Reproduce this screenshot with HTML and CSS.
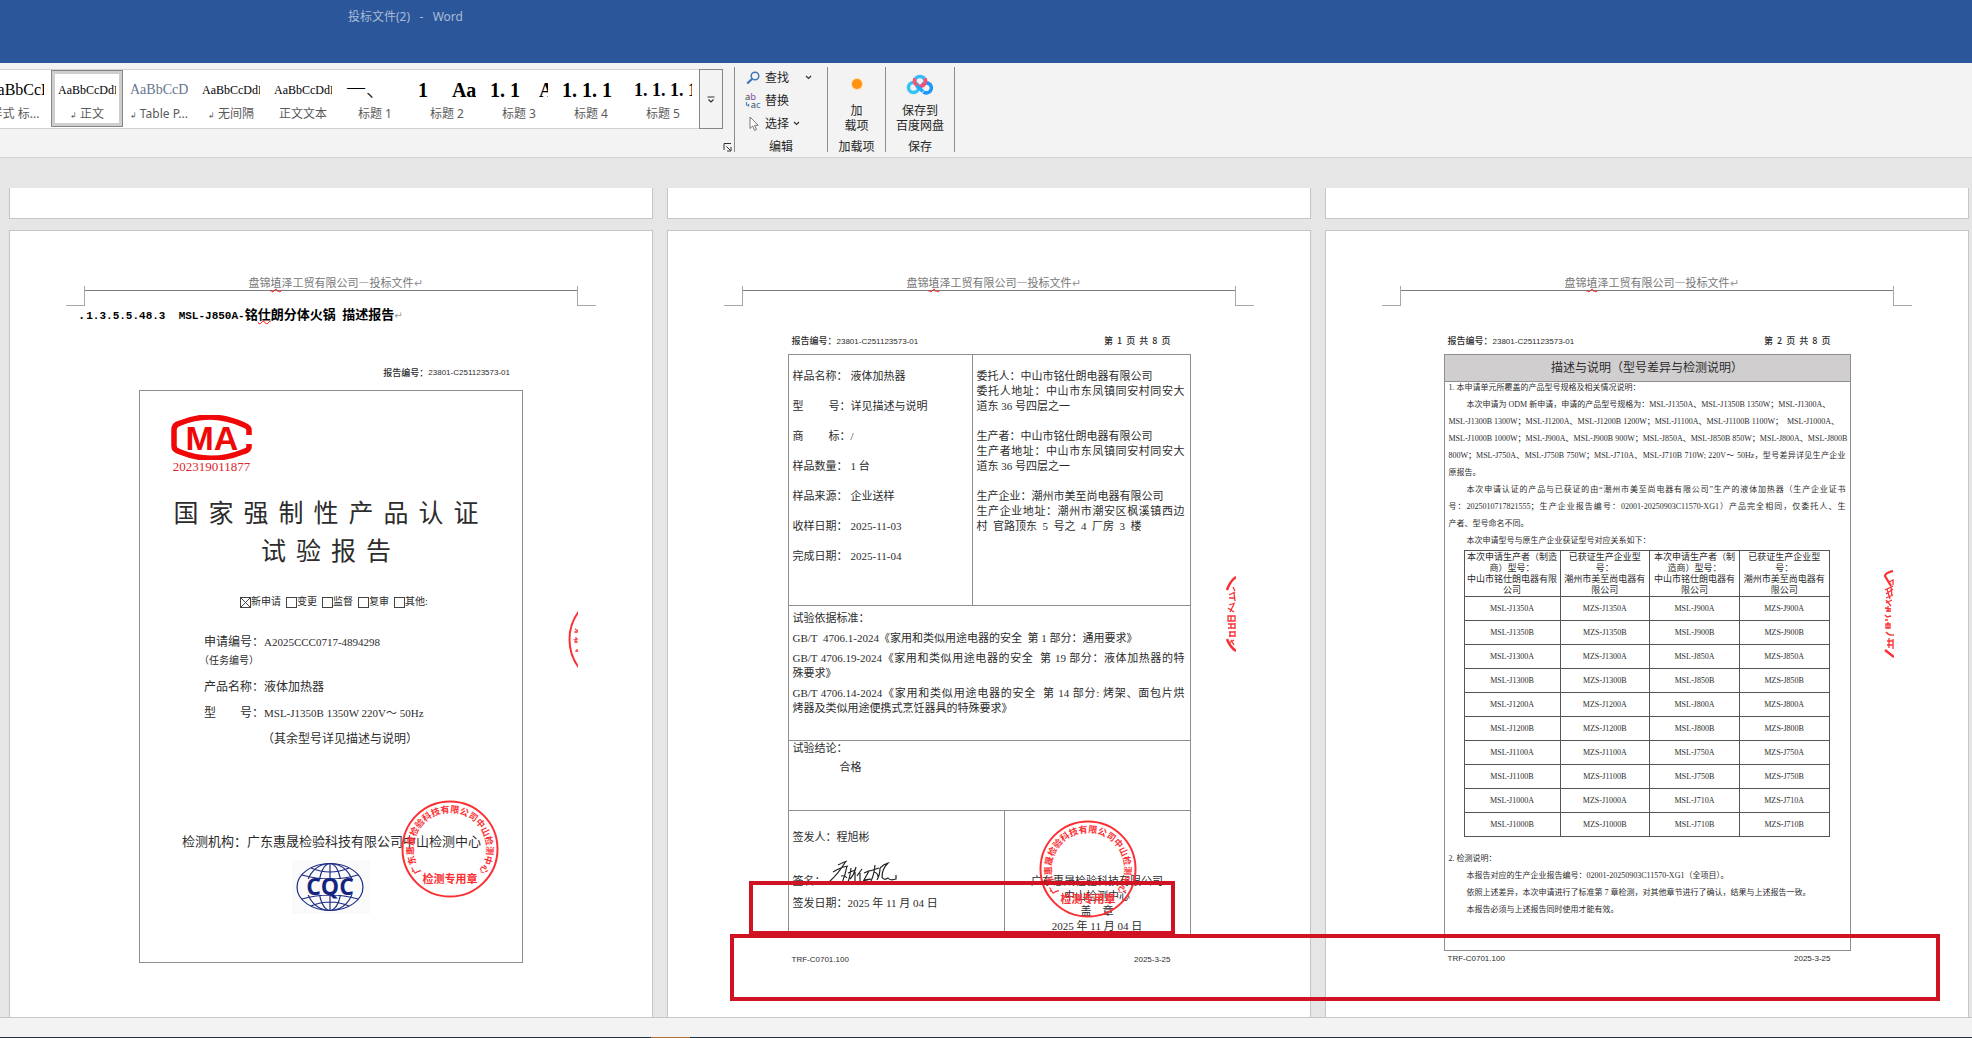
FILE: index.html
```html
<!DOCTYPE html>
<html lang="zh-CN">
<head>
<meta charset="utf-8">
<title>投标文件(2) - Word</title>
<link rel="stylesheet" href="styles.css">
</head>
<body>
<svg class="defs" aria-hidden="true">
  <defs>
    <path id="seal-arc" d="M21 72.500 A36.500 36.500 0 1 1 77 72.500"/>
    <symbol id="seal" viewBox="0 0 98 98">
      <circle cx="49" cy="49" r="47.5" fill="none" stroke="#fb3034" stroke-width="2"/>
      <text class="seal-ring"><textPath href="#seal-arc" startOffset="50%" text-anchor="middle">广东惠晟检验科技有限公司中山检测中心</textPath></text>
      <text class="seal-name" x="49" y="83" text-anchor="middle">检测专用章</text>
    </symbol>
    <symbol id="caret" viewBox="0 0 7 5"><path d="M1 1l2.5 2.5L6 1" fill="none" stroke="#333" stroke-width="1.2"/></symbol>
  </defs>
</svg>

<header class="titlebar">投标文件(2)&nbsp;&nbsp; -&nbsp;&nbsp; Word</header>

<div class="ribbon">
  <section class="group styles-group">
    <div class="gallery">
      <div class="gallery-items">
        <button class="style"><span class="preview p16">AaBbCcDdE</span><span class="name">样式 标...</span></button>
        <button class="style selected"><span class="preview p12">AaBbCcDdEe</span><span class="name"><i>↲</i> 正文</span></button>
        <button class="style"><span class="preview p14">AaBbCcDdE</span><span class="name"><i>↲</i> Table P...</span></button>
        <button class="style"><span class="preview p12">AaBbCcDdEe</span><span class="name"><i>↲</i> 无间隔</span></button>
        <button class="style"><span class="preview p12">AaBbCcDdEe</span><span class="name">正文文本</span></button>
        <button class="style"><span class="preview p20 thin">一、</span><span class="name">标题 1</span></button>
        <button class="style"><span class="preview p20 strong">1     Aa</span><span class="name">标题 2</span></button>
        <button class="style"><span class="preview p20 strong">1. 1    Aa</span><span class="name">标题 3</span></button>
        <button class="style"><span class="preview p20 strong">1. 1. 1</span><span class="name">标题 4</span></button>
        <button class="style"><span class="preview p18 strong">1. 1. 1. 1</span><span class="name">标题 5</span></button>
      </div>
      <button class="more" aria-label="其他样式"><svg width="8" height="7" viewBox="0 0 8 7"><path d="M0.5 1h7M1.5 3.5L4 6l2.500-2.500" fill="none" stroke="#333" stroke-width="1.200"/></svg></button>
    </div>
    <button class="launcher" aria-label="样式窗格"><svg width="9" height="9" viewBox="0 0 9 9"><path d="M1 7V.5h7M3.500 3.500l4 4M8 4v4H4" fill="none" stroke="#333"/></svg></button>
  </section>
  <section class="group edit-group">
    <div class="edit-list">
      <button class="cmd"><svg width="14" height="14" viewBox="0 0 14 14"><circle cx="9" cy="5" r="3.800" fill="none" stroke="#3f74b5" stroke-width="1.500"/><path d="M6 8L1.200 12.500" stroke="#3f74b5" stroke-width="2.200"/></svg><span>查找</span><svg class="far" width="7" height="5"><use href="#caret"/></svg></button>
      <button class="cmd"><svg width="17" height="16" viewBox="0 0 17 16"><text x="0" y="7" class="ab">a<tspan fill="#8a4fb0">b</tspan></text><text x="6" y="15" class="ab">a<tspan fill="#2f74c0">c</tspan></text><path d="M1.500 9v3.500H4M3 11l1.500 1.500L3 14" fill="none" stroke="#2f74c0"/></svg><span>替换</span></button>
      <button class="cmd"><svg width="14" height="16" viewBox="0 0 14 16"><path d="M4 1v11.500l2.700-2.600 1.900 4.500 1.900-.8-1.900-4.300h3.600z" fill="#fff" stroke="#777"/></svg><span>选择</span><svg width="7" height="5"><use href="#caret"/></svg></button>
    </div>
    <h2>编辑</h2>
  </section>
  <section class="group addin-group">
    <button class="big"><svg width="26" height="26" viewBox="0 0 26 26"><circle cx="13" cy="13" r="6" fill="#ffd9a0"/><circle cx="13" cy="13" r="5" fill="#ff9310"/></svg><span>加<br>载项</span></button>
    <h2>加载项</h2>
  </section>
  <section class="group save-group">
    <button class="big"><svg width="28" height="26" viewBox="0 0 28 26"><g fill="none" stroke-width="3.600"><circle cx="7.500" cy="16.500" r="5" stroke="#35c3f5"/><path d="M16 14.500a5 5 0 1 1 1.500 6.500" stroke="#1a9bfb"/><path d="M8.500 11a5.500 5.500 0 0 1 11 0" stroke="#38b9f8"/><path d="M19 7.500a5.500 5.500 0 1 1-10 0" stroke="#fb5273"/><path d="M10.500 14.500l6.500 6" stroke="#1fa8fa"/></g></svg><span>保存到<br>百度网盘</span></button>
    <h2>保存</h2>
  </section>
</div>

<main class="workspace">
  <div class="sheets tails"><div class="tail"></div><div class="tail"></div><div class="tail"></div></div>
  <div class="sheets">

    <article class="page">
      <div class="running"><span>盘锦<u>埴</u>泽工贸有限公司—投标文件</span><i>↵</i></div>
      <h1 class="outline"><b>.</b><span>1.3.5.5.48.3&nbsp;&nbsp;MSL-J850A-</span>铭<u>仕</u>朗分体火锅&nbsp; 描述报告<i>↵</i></h1>
      <div class="scan cover">
        <p class="report-no">报告编号：<span>23801-C251123573-01</span></p>
        <div class="frame">
          <div class="cma">
            <svg width="81" height="45" viewBox="0 0 81 45"><path d="M78 20V15Q78 12 73 10Q40-5 8 8.500Q3 10 3 15V31Q3 35 8 36.500Q40 50 73 36.500Q78 35 78 32V29" fill="none" stroke="#f00808" stroke-width="5.500"/><text x="41" y="35" text-anchor="middle">MA</text></svg>
            <p>202319011877</p>
          </div>
          <h2 class="cover-title">国家强制性产品认证<br>试验报告</h2>
          <div class="kinds">
            <label><input type="checkbox" checked>新申请</label>
            <label><input type="checkbox">变更</label>
            <label><input type="checkbox">监督</label>
            <label><input type="checkbox">复审</label>
            <label><input type="checkbox">其他:</label>
          </div>
          <dl class="facts">
            <dt>申请编号：</dt><dd class="code">A2025CCC0717-4894298</dd>
            <dt class="note">（任务编号）</dt><dd></dd>
            <dt>产品名称：</dt><dd>液体加热器</dd>
            <dt class="spread"><span>型</span><span>号：</span></dt><dd class="code">MSL-J1350B 1350W 220V～ 50Hz</dd>
            <dt></dt><dd>（其余型号详见描述与说明）</dd>
          </dl>
          <p class="lab">检测机构：广东惠晟检验科技有限公司中山检测中心</p>
          <svg class="cqc" width="78" height="54" viewBox="0 0 78 54"><rect width="78" height="54" fill="#fafafa"/><g fill="none" stroke="#1c2c84" stroke-width="1.200"><ellipse cx="38" cy="27" rx="33" ry="23.500"/><ellipse cx="38" cy="27" rx="23" ry="23.500"/><ellipse cx="38" cy="27" rx="11" ry="23.500"/><path d="M38 3.500v47M19 8q19 8 38 0M10 15q28 8 56 0M10 39q28-8 56 0M19 46q19-8 38 0"/></g><path d="M12 19h52v16H12z" fill="#fafafa"/><text x="38" y="34.500" text-anchor="middle">CQC</text></svg>
          <svg class="seal seal-cover" width="98" height="98"><use href="#seal"/></svg>
        </div>
      </div>
      <svg class="edge edge-a" width="10" height="57" viewBox="0 0 10 57"><circle cx="48" cy="28.500" r="46.500" fill="none" stroke="#fb3034" stroke-width="2"/><path d="M7 18l3 2M6 21h4M8 20v2M5.500 29l4.500-1M8 26v6M6 31h4M7 40h3M9 38v3" fill="none" stroke="#fb3034" stroke-width="1.200"/></svg>
    </article>

    <article class="page marked">
      <div class="running"><span>盘锦<u>埴</u>泽工贸有限公司—投标文件</span><i>↵</i></div>
      <div class="scan form">
        <p class="bar"><span>报告编号：<b>23801-C251123573-01</b></span><span class="folio">第  1  页  共  8  页</span></p>
        <div class="frame">
          <div class="sample">
            <dl>
              <dt>样品名称：</dt><dd>液体加热器</dd>
              <dt class="spread"><span>型</span><span>号：</span></dt><dd>详见描述与说明</dd>
              <dt class="spread"><span>商</span><span>标：</span></dt><dd>/</dd>
              <dt>样品数量：</dt><dd>1 台</dd>
              <dt>样品来源：</dt><dd>企业送样</dd>
              <dt>收样日期：</dt><dd>2025-11-03</dd>
              <dt>完成日期：</dt><dd>2025-11-04</dd>
            </dl>
            <div class="parties">
              <p><span>委托人：中山市铭仕朗电器有限公司</span><span class="full">委托人地址：中山市东凤镇同安村同安大</span><span>道东 36 号四层之一</span></p>
              <p><span>生产者：中山市铭仕朗电器有限公司</span><span class="full">生产者地址：中山市东凤镇同安村同安大</span><span>道东 36 号四层之一</span></p>
              <p><span>生产企业：潮州市美至尚电器有限公司</span><span class="full">生产企业地址：潮州市潮安区枫溪镇西边</span><span>村&nbsp; 官路顶东&nbsp; 5&nbsp; 号之&nbsp; 4&nbsp; 厂房&nbsp; 3&nbsp; 楼</span></p>
            </div>
          </div>
          <div class="standards">
            <p>试验依据标准：</p>
            <p>GB/T&nbsp; 4706.1-2024《家用和类似用途电器的安全&nbsp; 第 1 部分：通用要求》</p>
            <p><span class="full">GB/T 4706.19-2024《家用和类似用途电器的安全&nbsp; 第 19 部分：液体加热器的特</span><span>殊要求》</span></p>
            <p><span class="full">GB/T 4706.14-2024《家用和类似用途电器的安全&nbsp; 第 14 部分: 烤架、面包片烘</span><span>烤器及类似用途便携式烹饪器具的特殊要求》</span></p>
          </div>
          <div class="verdict"><p>试验结论：</p><p class="answer">合格</p></div>
          <div class="signoff">
            <div class="signer">
              <p>签发人：程旭彬</p>
              <p class="sign">签名：<svg width="68" height="24" viewBox="0 0 68 24"><path d="M9 5q6-3 9-4M17 1Q10 13 0 22M4 12q8-5 15-6M18 6q-2 10-5 17M12 16q4-1 6 2M22 8q-1 9-3 14M19 13l7-3M27 7q-2 8-6 12M26 12v10M33 9q-3 4-5 7M31 13v8M35 13l5-2-5 9 6-1M34 21l8-2M46 5q-1 10-4 16M41 11l9-3M45 12q4 1 4 5M51 8q0 7-3 12M51 8q4-4 8-5-6 6-6 14 2 4 6 1 2 3 8 1v-4" fill="none" stroke="#222" stroke-width="1.200"/></svg></p>
              <p>签发日期：2025 年 11 月 04 日</p>
            </div>
            <div class="issuer"><p>广东惠晟检验科技有限公司</p><p>中山检测中心</p><p>盖　章</p><p>2025 年 11 月 04 日</p>
              <svg class="seal seal-form" width="98" height="98"><use href="#seal"/></svg></div>
          </div>
        </div>
        <p class="bar foot"><b>TRF-C0701.100</b><b>2025-3-25</b></p>
      </div>
      <svg class="edge edge-b" width="10" height="76" viewBox="0 0 10 76"><g fill="none" stroke="#fb3034" stroke-width="1.300"><path d="M1 14Q4 5 10 1" stroke-width="2.500"/><path d="M7 11l2 4M3 19l6-3M3 22h5M8 17l1 8M3 29l6-2M2 32l6 4M8 28l-4 8M2 40h7v5H2zM5 40v5M2 48h7M2 52h7M5 48v4M9 47v6M3 56h6M4 56v5M9 55v6M3 60h6M3 67l5-3M5 64l3 5"/><path d="M1 63Q4 71 10 75" stroke-width="2.500"/></g></svg>
      <div class="mark mark-date"></div>
      <div class="mark mark-foot"></div>
    </article>

    <article class="page">
      <div class="running"><span>盘锦<u>埴</u>泽工贸有限公司—投标文件</span><i>↵</i></div>
      <div class="scan notes">
        <p class="bar"><span>报告编号：<b>23801-C251123573-01</b></span><span class="folio">第  2  页  共  8  页</span></p>
        <div class="frame">
          <h2>描述与说明（型号差异与检测说明）</h2>
          <div class="text">
            <p class="item">1. 本申请单元所覆盖的产品型号规格及相关情况说明：</p>
            <p class="para"><span>本次申请为 ODM 新申请，申请的产品型号规格为：MSL-J1350A、MSL-J1350B 1350W；MSL-J1300A、</span><span>MSL-J1300B 1300W；MSL-J1200A、MSL-J1200B 1200W；MSL-J1100A、MSL-J1100B 1100W；&nbsp; MSL-J1000A、</span><span class="full">MSL-J1000B 1000W；MSL-J900A、MSL-J900B 900W；MSL-J850A、MSL-J850B 850W；MSL-J800A、MSL-J800B</span><span class="full">800W；MSL-J750A、MSL-J750B 750W；MSL-J710A、MSL-J710B 710W; 220V～ 50Hz，型号差异详见生产企业</span><span>原报告。</span></p>
            <p class="para"><span class="full">本次申请认证的产品与已获证的由“潮州市美至尚电器有限公司”生产的液体加热器（生产企业证书</span><span class="full">号：2025010717821555；生产企业报告编号：02001-20250903C11570-XG1）产品完全相同，仅委托人、生</span><span>产者、型号命名不同。</span></p>
            <p class="para"><span>本次申请型号与原生产企业获证型号对应关系如下：</span></p>
            <table>
              <colgroup><col class="wide"><col><col><col></colgroup>
              <thead><tr><th>本次申请生产者（制造<br>商）型号：<br>中山市铭仕朗电器有限<br>公司</th><th>已获证生产企业型<br>号：<br>潮州市美至尚电器有<br>限公司</th><th>本次申请生产者（制<br>造商）型号：<br>中山市铭仕朗电器有<br>限公司</th><th>已获证生产企业型<br>号：<br>潮州市美至尚电器有<br>限公司</th></tr></thead>
              <tbody>
                <tr><td>MSL-J1350A</td><td>MZS-J1350A</td><td>MSL-J900A</td><td>MZS-J900A</td></tr>
                <tr><td>MSL-J1350B</td><td>MZS-J1350B</td><td>MSL-J900B</td><td>MZS-J900B</td></tr>
                <tr><td>MSL-J1300A</td><td>MZS-J1300A</td><td>MSL-J850A</td><td>MZS-J850A</td></tr>
                <tr><td>MSL-J1300B</td><td>MZS-J1300B</td><td>MSL-J850B</td><td>MZS-J850B</td></tr>
                <tr><td>MSL-J1200A</td><td>MZS-J1200A</td><td>MSL-J800A</td><td>MZS-J800A</td></tr>
                <tr><td>MSL-J1200B</td><td>MZS-J1200B</td><td>MSL-J800B</td><td>MZS-J800B</td></tr>
                <tr><td>MSL-J1100A</td><td>MZS-J1100A</td><td>MSL-J750A</td><td>MZS-J750A</td></tr>
                <tr><td>MSL-J1100B</td><td>MZS-J1100B</td><td>MSL-J750B</td><td>MZS-J750B</td></tr>
                <tr><td>MSL-J1000A</td><td>MZS-J1000A</td><td>MSL-J710A</td><td>MZS-J710A</td></tr>
                <tr><td>MSL-J1000B</td><td>MZS-J1000B</td><td>MSL-J710B</td><td>MZS-J710B</td></tr>
              </tbody>
            </table>
            <div class="testing">
              <p>2. 检测说明：</p>
              <p class="para">本报告对应的生产企业报告编号：02001-20250903C11570-XG1（全项目）。</p>
              <p class="para">依照上述差异，本次申请进行了标准第 7 章检测，对其他章节进行了确认，结果与上述报告一致。</p>
              <p class="para">本报告必须与上述报告同时使用才能有效。</p>
            </div>
          </div>
        </div>
        <p class="bar foot"><b>TRF-C0701.100</b><b>2025-3-25</b></p>
      </div>
      <svg class="edge edge-c" width="10" height="88" viewBox="0 0 10 88"><g fill="none" stroke="#fb3034" stroke-width="1.300"><path d="M9 1Q1 3 1 6L7 16" stroke-width="2.200"/><path d="M5 12l4-2v5M1 20l8-4M2 24l7-5M2 28l7-3M3 19l3 10M7 17l1 9M2 33l6-3M2 30l5 6M1 38l6 1M2 41h5M4 36v6M1 45l2 2 4-1M1 50h3M2 54h4v4H2zM4 52v6M2 62q3 4 8 3M5 68v10M3 71h6M3 75h6M9 69v10"/><path d="M1 80l9 7" stroke-width="2.500"/></g></svg>
    </article>
  </div>
</main>
<footer class="statusbar"></footer>
</body>
</html>
```
FILE: styles.css
```css
* { box-sizing: border-box; }
body, h1, h2, p, dl, dd { margin: 0; }
body {
  display: flex;
  flex-direction: column;
  height: 100vh;
  overflow: hidden;
  background: #e6e6e6;
  font: 12px/15px "Noto Sans", "Noto Sans CJK SC", sans-serif;
  color: #262626;
}
button { padding: 0; border: 0; background: none; font: inherit; color: inherit; }
svg { display: block; flex: none; }
i { font-style: normal; }
.defs { position: absolute; width: 0; height: 0; }

/* Title bar */
.titlebar {
  flex: none;
  height: 63px;
  padding: 9px 0 0 348px;
  background: #2b579a;
  color: #a9bbd8;
}

/* Ribbon */
.ribbon {
  display: flex;
  flex: none;
  height: 95px;
  padding: 4px 0 5px;
  background: #f3f3f3;
  border-bottom: 1px solid #d2d2d2;
}
.group {
  position: relative;
  display: flex;
  flex-direction: column;
  align-items: center;
  justify-content: space-between;
  border-right: 1px solid #8c8c8c;
}
.group h2 { font-size: 12px; font-weight: 400; line-height: 10px; }
.styles-group { width: 735px; align-items: stretch; padding-top: 2px; }
.gallery { display: flex; height: 60px; width: 723px; }
.gallery-items {
  display: flex;
  flex: 1;
  justify-content: flex-end;
  overflow: hidden;
  background: #fff;
  border: solid #d0d0d0;
  border-width: 1px 0;
}
.style {
  display: flex;
  flex: none;
  flex-direction: column;
  align-items: center;
  width: 72px;
  height: 57px;
  padding: 8px 7px 0;
}
.style.selected { padding: 4px 3px 0; border: 1px solid #868686; box-shadow: inset 0 0 0 3px #d0cecc; }
.style.selected .preview { width: 58px; margin-top: 3px; }
.preview {
  width: 100%;
  height: 26px;
  overflow: hidden;
  color: #000;
  font-family: "Liberation Serif", "Noto Sans CJK SC", serif;
  line-height: 24px;
  text-align: left;
  white-space: pre;
}
.p12 { font-size: 12px; }
.p14 { font-size: 14px; color: #66758c; }
.p16 { font-size: 16px; }
.p18 { font-size: 18px; }
.p20 { font-size: 20px; }
.strong { font-weight: 700; }
.thin { font-weight: 300; }
.name { color: #5a5a5a; line-height: 20px; white-space: nowrap; }
.name i { font-family: "DejaVu Sans", sans-serif; font-size: 8px; }
.more { display: grid; place-items: center; width: 24px; border: 1px solid #868686; }
.launcher { align-self: flex-end; margin-right: 2px; }
.edit-group { width: 93px; }
.edit-list { display: flex; flex-direction: column; align-self: stretch; margin-top: -1px; padding-left: 10px; }
.cmd { display: flex; align-items: center; height: 23px; gap: 4px; }
.cmd > svg:first-child { width: 16px; }
.cmd .far { margin-left: 12px; }
.ab { font: 10px "Noto Sans", sans-serif; fill: #444; }
.addin-group { width: 58px; }
.save-group { width: 69px; }
.big { display: flex; flex-direction: column; align-items: center; padding-top: 4px; gap: 6px; }

/* Document area */
.workspace { flex: 1; min-height: 0; overflow: hidden; padding: 30px 3px 0 9px; }
.sheets { display: grid; grid-template-columns: repeat(3, 1fr); gap: 14px; }
.tails { margin-bottom: 11px; }
.tail { height: 31px; background: #fff; border: 1px solid #c6c6c6; border-top: 0; }
.page {
  position: relative;
  min-height: 910px;
  padding: 43px 75px 0;
  background: #fff;
  border: 1px solid #c6c6c6;
}
.marked { z-index: 1; }
.running {
  position: relative;
  height: 17px;
  border-bottom: 1px solid #7d7d7d;
  color: #777;
  font-family: "Noto Sans CJK SC", sans-serif;
  font-size: 11px;
  line-height: 16px;
  text-align: center;
}
.running::before, .running::after {
  content: "";
  position: absolute;
  top: 12px;
  width: 18px;
  height: 19px;
  border-bottom: 1px solid #a8a8a8;
}
.running::before { right: 100%; border-right: 1px solid #a8a8a8; }
.running::after { left: 100%; border-left: 1px solid #a8a8a8; }
.running i { position: absolute; color: #999; }
u { text-decoration: underline wavy #f00 1px; text-underline-offset: 1px; }
.outline {
  margin: 14px 0 0 -5px;
  color: #000;
  font: 700 13px/20px "Liberation Serif", "Noto Sans CJK SC", serif;
  white-space: nowrap;
}
.outline span { font-family: "Liberation Mono", monospace; font-size: 11px; }
.outline i { color: #999; font-family: "DejaVu Sans", sans-serif; font-size: 10px; font-weight: 400; }
.outline b { margin-right: 3px; }

/* Scanned report sheets */
.scan { margin: 44px auto 0; font-family: "Liberation Serif", "Noto Sans CJK SC", serif; color: #2c2c2c; }
.frame { position: relative; border: 1px solid #8f8f8f; }
.spread { display: flex; justify-content: space-between; }
.full { text-align: justify; text-align-last: justify; }
.bar, .report-no {
  display: flex;
  font: 500 9px/12px "Noto Sans CJK SC", sans-serif;
  white-space: pre;
}
.bar b, .report-no span { font: 8px/12px "Liberation Sans", sans-serif; }
.bar { justify-content: space-between; padding: 0 20px 0 4px; }
.bar + .frame { margin-top: 6px; }

.cover { width: 384px; margin-top: 41px; }
.report-no { justify-content: flex-end; padding-right: 13px; margin-bottom: 11px; }
.cover .frame { padding: 24px 31px 48px; }
.cma { width: 81px; }
.cma text { font: 700 34px "Liberation Sans", sans-serif; fill: #f00808; }
.cma p { color: #e0252b; font-size: 13px; line-height: 13px; text-align: center; }
.cover-title { margin-top: 22px; font-size: 25px; font-weight: 400; line-height: 38px; letter-spacing: 10px; text-align: center; white-space: nowrap; }
.kinds { display: flex; gap: 5px; margin: 24px 0 25px 69px; font-size: 10px; line-height: 14px; }
.kinds label { display: flex; align-items: center; white-space: nowrap; }
.kinds input { appearance: none; width: 11px; height: 11px; margin: 0; border: 1px solid #444; }
.kinds input:checked {
  background:
    linear-gradient(45deg, transparent 46%, #444 46%, #444 54%, transparent 54%),
    linear-gradient(-45deg, transparent 46%, #444 46%, #444 54%, transparent 54%);
}
.facts { display: grid; grid-template-columns: 60px 1fr; row-gap: 10px; padding-left: 33px; line-height: 16px; white-space: nowrap; }
.facts .code { font-size: 11px; }
.facts .note { font-size: 10px; line-height: 14px; margin: -6px 0 1px -5px; }
.facts dd:last-child { margin-left: -2px; }
.lab { margin: 87px 0 10px 11px; font-size: 13px; line-height: 16px; white-space: nowrap; }
.cqc { margin-left: 121px; }
.cqc text { font: 700 23px "Open Sans", sans-serif; fill: #14237d; }

.seal { position: absolute; }
.seal-cover { left: 261px; top: 409px; }
.seal-form { left: 34px; top: 9px; }
.seal-ring { font: 700 9px "Noto Sans CJK SC", sans-serif; fill: #fb3034; }
.seal-name { font: 700 11px "Noto Sans CJK SC", sans-serif; fill: #fb3034; }
.edge { position: absolute; right: 74px; }
.edge-a { top: 380px; }
.edge-b { top: 345px; }
.edge-c { top: 339px; }

.form { width: 403px; }
.form .frame { font-size: 11px; line-height: 15px; white-space: nowrap; }
.sample { display: grid; grid-template-columns: 184px 1fr; min-height: 251px; border-bottom: 1px solid #8f8f8f; }
.sample dl { display: grid; grid-template-columns: 58px 1fr; gap: 15px 0; align-content: start; padding: 14px 4px 0; border-right: 1px solid #8f8f8f; }
.parties { display: grid; gap: 15px; align-content: start; padding: 14px 5px 0 4px; }
.form p span, .text .para span { display: block; }
.form .bar span { display: inline; }
.standards { display: grid; gap: 5px; align-content: start; min-height: 135px; padding: 5px 5px 0 4px; border-bottom: 1px solid #8f8f8f; }
.verdict { display: grid; gap: 4px; align-content: start; min-height: 70px; padding-left: 4px; border-bottom: 1px solid #8f8f8f; }
.answer { padding-left: 47px; }
.signoff { display: grid; grid-template-columns: 216px 1fr; min-height: 122px; }
.signer { padding: 19px 4px 0; border-right: 1px solid #8f8f8f; }
.sign { position: relative; margin: 29px 0 7px; }
.sign svg { position: absolute; left: 36px; top: -14px; }
.issuer { position: relative; padding-top: 63px; text-align: center; }
.form .foot { margin-top: 19px; }

.mark { position: absolute; border: 4px solid #d01322; }
.mark-date { left: 81px; top: 650px; width: 426px; height: 54px; }
.mark-foot { left: 62px; top: 703px; width: 1210px; height: 67px; }

.notes { width: 407px; }
.notes h2 { height: 27px; background: #d0cece; border-bottom: 1px solid #8f8f8f; font-size: 12px; font-weight: 400; line-height: 26px; text-align: center; }
.text { padding: 0 4px 32px; font-size: 8px; line-height: 17px; white-space: nowrap; }
.item { line-height: 12px; margin-bottom: 2px; }
.para { text-indent: 18px; }
.para span + span { text-indent: 0; }
.notes table { width: 366px; margin: 1px 0 13px 15px; border-collapse: collapse; table-layout: fixed; text-align: center; }
.wide { width: 96px; }
.notes th, .notes td { height: 24px; padding: 0; border: 1px solid #555; font-weight: 400; line-height: 11px; }
.notes th { height: 46px; font-size: 9px; }
.notes .foot { margin-top: 2px; }

/* Status bar with the desktop edge showing below */
.statusbar {
  flex: none;
  height: 21px;
  background: linear-gradient(90deg, #22303f 33%, #b07030 33%, #b07030 35%, #22303f 35%) bottom / 100% 1px no-repeat #f3f3f3;
  border-top: 1px solid #c6c6c6;
}
```
